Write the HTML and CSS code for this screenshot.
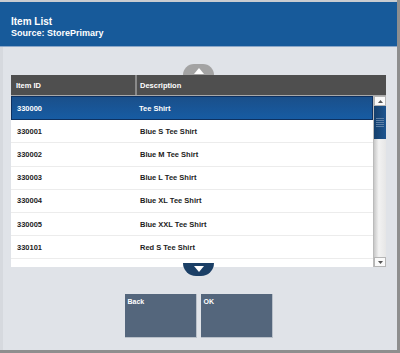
FILE: index.html
```html
<!DOCTYPE html>
<html lang="en">
<head>
    <meta charset="UTF-8">
    <title>Item List</title>
    <link rel="stylesheet" href="styles.css">
</head>
<body>
    <div class="screen">
        <div class="header">
            <h1>Item List</h1>
            <p>Source: StorePrimary</p>
        </div>
        <div class="content">
            <div class="arrow-tab up">
                <svg width="10" height="6" viewBox="0 0 10 6"><path d="M5 0L10 6H0Z" fill="#fff"/></svg>
            </div>
            <div class="grid">
                <div class="grid-head">
                    <div class="col-id">Item ID</div>
                    <div class="col-desc">Description</div>
                </div>
                <div class="grid-body">
                    <div class="rows">
                        <div class="row selected"><span class="col-id">330000</span><span class="col-desc">Tee Shirt</span></div>
                        <div class="row"><span class="col-id">330001</span><span class="col-desc">Blue S Tee Shirt</span></div>
                        <div class="row"><span class="col-id">330002</span><span class="col-desc">Blue M Tee Shirt</span></div>
                        <div class="row"><span class="col-id">330003</span><span class="col-desc">Blue L Tee Shirt</span></div>
                        <div class="row"><span class="col-id">330004</span><span class="col-desc">Blue XL Tee Shirt</span></div>
                        <div class="row"><span class="col-id">330005</span><span class="col-desc">Blue XXL Tee Shirt</span></div>
                        <div class="row"><span class="col-id">330101</span><span class="col-desc">Red S Tee Shirt</span></div>
                        <div class="row"></div>
                    </div>
                    <div class="scrollbar">
                        <div class="sb-btn"><svg width="5" height="3" viewBox="0 0 5 3"><path d="M2.5 0L5 3H0Z" fill="#555"/></svg></div>
                        <div class="sb-track">
                            <div class="sb-thumb">
                                <span></span><span></span><span></span><span></span><span></span>
                            </div>
                        </div>
                        <div class="sb-btn"><svg width="5" height="3" viewBox="0 0 5 3"><path d="M0 0H5L2.5 3Z" fill="#555"/></svg></div>
                    </div>
                </div>
            </div>
            <div class="arrow-tab down">
                <svg width="10" height="6" viewBox="0 0 10 6"><path d="M0 0H10L5 6Z" fill="#fff"/></svg>
            </div>
            <div class="buttons">
                <button>Back</button>
                <button>OK</button>
            </div>
        </div>
    </div>
</body>
</html>
```

FILE: styles.css
```css
body {
    margin: 0;
    font-family: "Liberation Sans", Arial, sans-serif;
    background-color: #8e8e8e;
}
.screen {
    width: 397px;
    height: 350px;
    background-color: #e0e3e8;
    border-top: 2px solid #c9ccd1;
    box-sizing: border-box;
    display: flex;
    flex-direction: column;
    box-shadow: inset 3px 0 0 #d6d9de;
}
.header {
    background-color: #175a9a;
    height: 45px;
    padding: 14px 0 0 11px;
    box-sizing: border-box;
    color: #fff;
    border-bottom: 1px solid #8ba7c8;
}
.header h1 {
    margin: 0;
    font-size: 10px;
    line-height: 12px;
}
.header p {
    margin: 0;
    font-size: 9px;
    font-weight: bold;
    line-height: 10px;
}
.content {
    display: flex;
    flex-direction: column;
    align-items: center;
    padding-top: 17px;
}
.arrow-tab {
    width: 31px;
    height: 11px;
    display: flex;
    justify-content: center;
}
.arrow-tab.up {
    background-color: #a3a3a3;
    border-radius: 16px 16px 0 0;
    align-items: center;
    padding-top: 2px;
    box-sizing: border-box;
}
.arrow-tab.down {
    background-color: #1b3f66;
    border-radius: 0 0 16px 16px;
    height: 13px;
    align-items: flex-start;
    padding-top: 3px;
    box-sizing: border-box;
    margin-top: -4px;
}
.grid {
    width: 375px;
    font-size: 7.5px;
    font-weight: bold;
}
.grid-head {
    display: flex;
    height: 20px;
    background-color: #4f4f4f;
    color: #fff;
    border-bottom: 1px solid #a9a9a9;
}
.grid-head div {
    display: flex;
    align-items: center;
}
.grid-head .col-id {
    width: 119px;
    padding-left: 5px;
    border-right: 2px solid #8a8a8a;
}
.grid-head .col-desc {
    padding-left: 3px;
}
.grid-body {
    display: flex;
    height: 171px;
    background-color: #fff;
}
.rows {
    flex: 1;
    overflow: hidden;
}
.row {
    display: flex;
    align-items: center;
    height: 22.2px;
    border-bottom: 1px solid #ececec;
    color: #222;
}
.row.selected {
    background: linear-gradient(#1a4f8a, #175ca3);
    color: #fff;
    border: 1px solid #0e3160;
    height: 21.2px;
    padding-top: 1px;
    box-sizing: content-box;
}
.row .col-id {
    width: 122px;
    padding-left: 6px;
}
.row.selected .col-id {
    width: 121px;
    padding-left: 5px;
}
.row .col-desc {
    padding-left: 1px;
}
.scrollbar {
    width: 12px;
    display: flex;
    flex-direction: column;
    background: linear-gradient(to right, #c8c8c8, #f2f2f2 40%, #e6e6e6);
    border-left: 1px solid #bbb;
}
.sb-btn {
    height: 10px;
    background-color: #fafafa;
    border: 1px solid #b5b5b5;
    box-sizing: border-box;
    display: flex;
    align-items: center;
    justify-content: center;
}
.sb-track {
    flex: 1;
}
.sb-thumb {
    height: 33px;
    background: linear-gradient(to right, #153f6c, #1d5590);
    display: flex;
    flex-direction: column;
    align-items: center;
    justify-content: center;
    gap: 1px;
}
.sb-thumb span {
    width: 8px;
    height: 1px;
    background-color: #5f80a6;
}
.buttons {
    display: flex;
    gap: 4px;
    margin-top: 18px;
}
.buttons button {
    width: 72px;
    height: 44px;
    background-color: #54667c;
    border: none;
    border-right: 1px solid #b9c0c9;
    border-bottom: 1px solid #b9c0c9;
    color: #fff;
    font-family: "Liberation Sans", Arial, sans-serif;
    font-size: 7px;
    font-weight: bold;
    text-align: left;
    padding: 4px 3px;
    display: flex;
    align-items: flex-start;
}
```
